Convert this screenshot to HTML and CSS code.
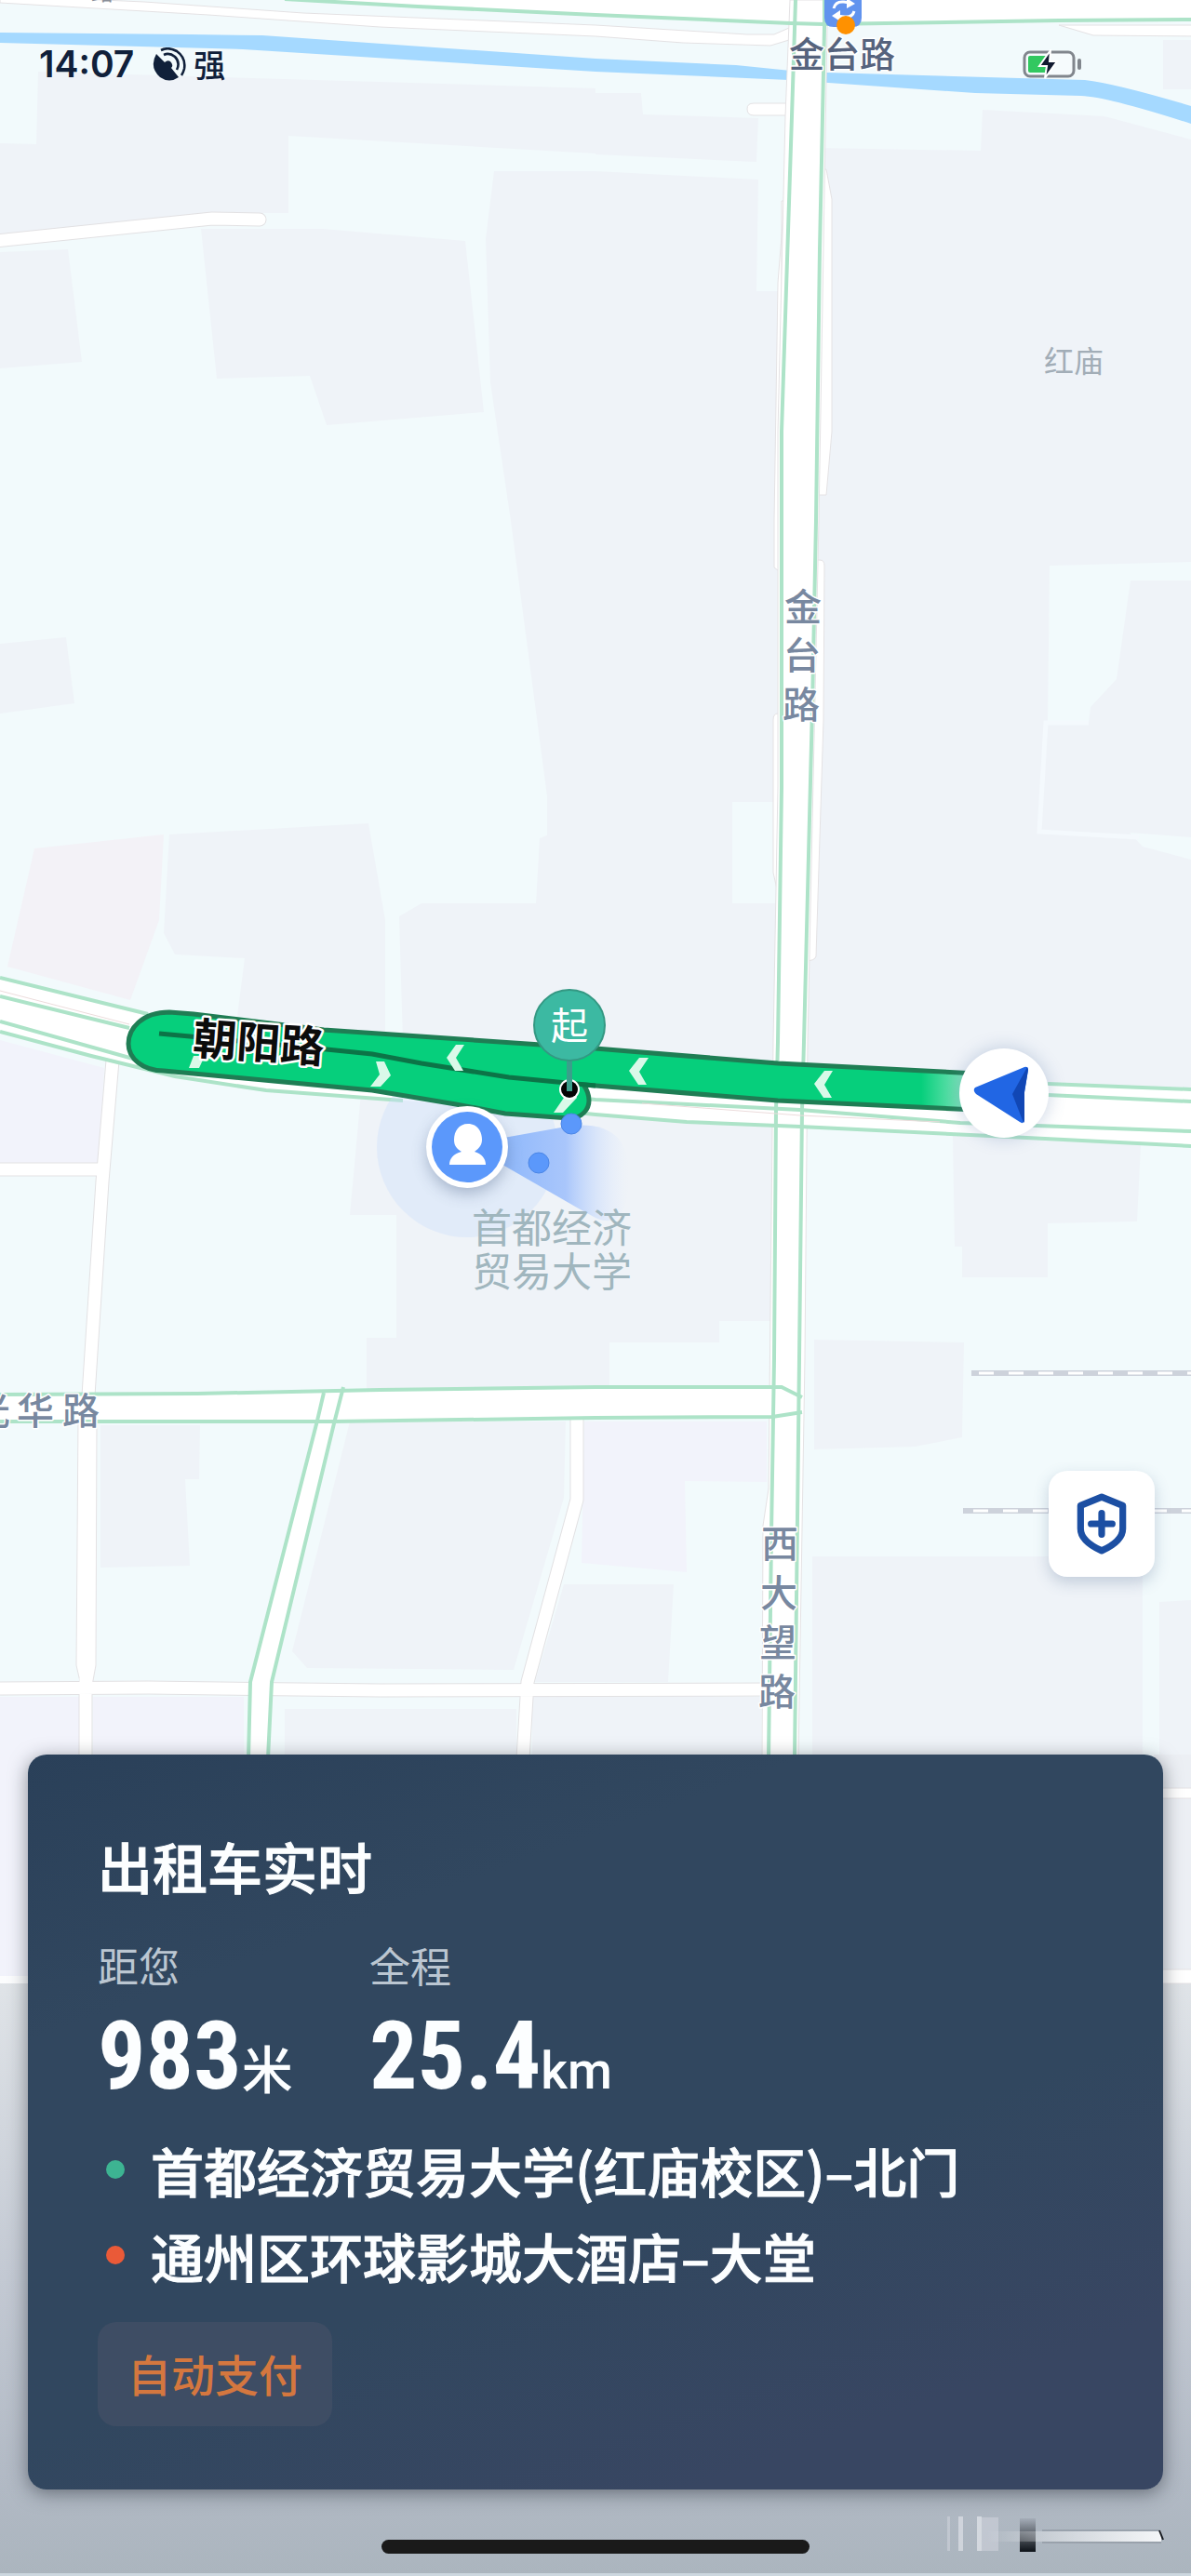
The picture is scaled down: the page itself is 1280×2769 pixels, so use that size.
FILE: index.html
```html
<!DOCTYPE html>
<html lang="zh-CN">
<head>
  <meta charset="utf-8">
  <meta name="viewport" content="width=device-width, initial-scale=1">
  <title>出租车实时</title>
  <link rel="stylesheet" href="styles.css">
</head>
<body>
  <div class="screen">
    <svg class="map" viewBox="0 0 1280 2769" preserveAspectRatio="xMidYMin slice" role="img" aria-label="地图">
      <defs>
        <linearGradient id="routeFill" gradientUnits="userSpaceOnUse" x1="990" y1="0" x2="1070" y2="0">
          <stop offset="0" stop-color="#06cf7c"/>
          <stop offset="1" stop-color="#d8f6e8"/>
        </linearGradient>
        <linearGradient id="cone" gradientUnits="userSpaceOnUse" x1="540" y1="0" x2="676" y2="0">
          <stop offset="0" stop-color="#8fb8fb"/>
          <stop offset="0.5" stop-color="#a9c6fb"/>
          <stop offset="1" stop-color="#dfeafd" stop-opacity="0"/>
        </linearGradient>
        <linearGradient id="floor" x1="0" y1="0" x2="0" y2="1">
          <stop offset="0" stop-color="#e0e4e8"/>
          <stop offset="0.5" stop-color="#c3c9d3"/>
          <stop offset="0.85" stop-color="#b1b9c4"/>
          <stop offset="1" stop-color="#abb5be"/>
        </linearGradient>
        <linearGradient id="darkBar" x1="0" y1="0" x2="0" y2="1">
          <stop offset="0" stop-color="#a5adb8"/>
          <stop offset="1" stop-color="#0d1218"/>
        </linearGradient>
        <linearGradient id="whiteLine" x1="0" y1="0" x2="1" y2="0">
          <stop offset="0" stop-color="#fff" stop-opacity="0"/>
          <stop offset="1" stop-color="#f4f6f8"/>
        </linearGradient>
        <filter id="soft" x="-50%" y="-50%" width="200%" height="200%">
          <feGaussianBlur stdDeviation="9"/>
        </filter>
      </defs>

      <!-- blocks -->
      <g class="block">
        <path d="M41 77L640 95V165L310 146V229L224 229L0 253V154L39 155Z"/>
        <path d="M640 100L689 100L691 123L815 127L813 174L640 166Z"/>
        <path d="M0 271L73 268L88 389L0 396Z"/>
        <path d="M216 246H347L500 259L520 443L351 457L333 404L233 407Z"/>
        <path d="M531 184H640L815 193L813 313H840V862H787V971H840V1150L433 1120L429 985L453 971H576L580 901L588 898V856L549 560L527 411L522 257Z"/>
        <path d="M880 159L1054 162L1056 118L1187 125L1280 150V1180L860 1150Z"/>
        <path d="M1250 43H1280V96H1250Z"/>
        <path d="M0 692L71 685L80 756L0 767Z"/>
        <path d="M182 897L396 885L414 989V1115L255 1092L263 1030L188 1026L176 1003Z"/>
        <path d="M388 1175L830 1205V1420H773V1443H655V1495H394V1438H426V1306H376Z"/>
        <path d="M1024 1220L1226 1230L1222 1313L1126 1315V1373H1034V1340H1026Z"/>
        <path d="M875 1440L1036 1443L1034 1545L983 1555L875 1558Z"/>
        <path d="M873 1673H1228V1900H873Z"/>
        <path d="M1246 1722L1280 1720V1900H1246Z"/>
        <path d="M108 1532H215L214 1590H199L204 1683L108 1685Z"/>
        <path d="M376 1528H608L606 1610L552 1795L330 1793L314 1775Z"/>
        <path d="M606 1703H724L718 1808H575Z"/>
        <path d="M306 1837H555V1890H306Z"/>
        <path d="M572 1824H818V1890H572Z"/>
      </g>
      <path class="block-pink" d="M37 912L176 897L171 989L140 1075L8 1039Z"/>
      <g class="block-violet">
        <path d="M0 1118L112 1148L106 1251H0Z"/>
        <path d="M628 1528H824V1593L736 1592L738 1690L625 1680Z"/>
        <path d="M0 1824H86V2126H0Z"/>
        <path d="M100 1824H262V1890H100Z"/>
      </g>
      <path class="ground" d="M1128 608L1280 604V624H1215L1200 730L1172 760L1170 777L1126 775Z"/>
      <path class="ground" d="M1214 895L1280 900V924L1228 910Z"/>
      <path class="ground-line" d="M1170 777H1124L1117 894L1224 900"/>

      <!-- water -->
      <path class="water" d="M0 35L204 37L282 38L640 63L791 70L850 76L889 78L1166 86Q1200 90 1280 114V133Q1190 104 1162 103L1048 100L848 86L640 77L261 53L0 46Z"/>

      <!-- minor roads -->
      <path class="white" d="M306 0L449 7L640 16L850 25L885 26L1138 22L1280 21V0Z"/>
      <path class="minor" d="M0 -5L155 2L326 14L640 27L803 37H832L848 30V43L828 49L734 46L640 39L408 29L224 16L0 3Z"/>
      <path class="minor" d="M1138 27L1175 38L1290 39V27Z"/>
      <path class="minor" d="M850 111H810Q803 111 803 117Q803 124 810 124H850Z"/>
      <path class="minor-edge" d="M-5 259L228 235L279 236"/>
      <path class="minor-fill" d="M-5 259L228 235L279 236"/>
      <path class="minor-edge butt" d="M121 1140L110 1270L95 1500M-5 1257H111M620 1524V1612L567 1808L562 1890M-5 1815L160 1814L408 1817L830 1816M92 1808V1890"/>
      <path class="minor" d="M84 1524L82 1790L87 1812H99L103 1790L104 1524Z"/>
      <path class="minor-fill butt" d="M121 1140L110 1270L95 1500M-5 1257H111M620 1524V1612L567 1808L562 1890M-5 1815L160 1814L408 1817L830 1816M92 1804V1890"/>

      <!-- railway -->
      <path class="rail" d="M1044 1476H1280M1035 1624H1280"/>
      <path class="rail-dash" d="M1052 1476H1280M1046 1624H1280"/>

      <!-- main roads -->
      <path class="minor" d="M843 216L836 304L832 560V610L840 616V216Z"/>
      <path class="minor" d="M884 182L888 182L894 214V464L888 532H876Z"/>
      <path class="minor" d="M876 602H881Q886 602 886 608L885 774L877 1028Q876 1033 864 1033Z"/>
      <path class="minor" d="M840 767H836Q831 767 831 774V938L836 960Z"/>
      <path class="minor" d="M849 0L844 125L836 464V846L831 1120L826 1600L820 1640L819 1890H858L865 1460L868 1120L880 560L889 29V0Z"/>
      <path class="white" d="M0 1051L159 1090L640 1130L1126 1165L1280 1171V1232L1064 1221L860 1211L738 1206L640 1198L433 1183L286 1172L188 1157L98 1135L0 1109Z"/>
      <path class="white" d="M0 1499L212 1498L408 1494L640 1491H840L862 1502V1518L830 1523L640 1524L359 1528L292 1808L288 1890H267L269 1808L341 1528H0Z"/>
      <g class="green">
        <path d="M306 -1L449 7L640 16L850 25L885 26L1138 22L1280 21"/>
        <path d="M855 0L851 125L840 464V846L836 1120L834 1193L832 1460L829 1650L826 1890"/>
        <path d="M886 0V29L881 268L877 560L873 760L864 1120L862 1193L859 1460L854 1890"/>
        <path d="M0 1051L159 1090M0 1071L139 1105M0 1098L150 1140M0 1109L98 1135L188 1157L286 1172L433 1183"/>
        <path d="M620 1180L640 1182L860 1193L1032 1207L1280 1216"/>
        <path d="M600 1194L640 1198L738 1206L860 1211L1064 1221L1280 1232"/>
        <path d="M1126 1165L1280 1171M1126 1177L1280 1184"/>
        <path d="M0 1499L212 1498L408 1494L640 1491H840L862 1502"/>
        <path d="M0 1528H359L640 1524L830 1523L862 1518"/>
        <path d="M348 1497L341 1527L269 1808L267 1890M369 1491L359 1530L292 1808L288 1890"/>
      </g>
      <path class="hairline" d="M0 1065L139 1101M690 1186L860 1199L1010 1206"/>

      <!-- area beside and under the trip card -->
      <rect x="1240" y="1886" width="40" height="245" fill="#eceff4"/>
      <path class="minor" d="M1200 1922H1290V1933H1200Z"/>
      <rect x="0" y="2128" width="1280" height="641" fill="url(#floor)"/>
      <rect x="0" y="2124" width="40" height="8" fill="#fcfdfe"/>
      <path class="minor" d="M1200 2117H1290V2132H1200Z"/>
      <rect x="0" y="2766" width="1280" height="3" fill="#ccd7df"/>

      <!-- user accuracy and heading -->
      <circle cx="502" cy="1233" r="97" fill="#c9dcfb" opacity="0.35"/>
      <path d="M502 1230L614 1210Q676 1204 676 1262Q676 1325 640 1309L620 1298Z" fill="url(#cone)"/>

      <!-- route -->
      <path class="route" d="M1070 1155L836 1143L640 1127L348 1107L208 1090L182 1088C152 1088 138 1106 138 1122C138 1138 154 1151 176 1151L208 1154L400 1172L490 1187L543 1197L612 1202C626 1202 633 1192 633 1183C633 1176 630 1170 627 1166L640 1167L836 1183L1070 1194"/>
      <path class="route-line" d="M171 1111L204 1114L351 1128L400 1133L453 1143L547 1158L640 1167"/>
      <g class="chevron">
        <path d="M490 1123H499L490 1137L498 1151H489L480 1137Z"/>
        <path d="M687 1137H697L687 1152L695 1166H686L676 1151Z"/>
        <path d="M886 1151H895L886 1166L894 1180H885L875 1165Z"/>
        <path d="M404 1141H413L420 1156L409 1168H398L408 1155Z"/>
        <path d="M208 1135H220L214 1148H203Z"/>
        <path d="M606 1168H616L620 1180L605 1196H595L606 1180Z"/>
      </g>

      <!-- start pin -->
      <circle cx="612" cy="1171" r="11" fill="#fff"/>
      <circle cx="612" cy="1171" r="9" fill="#050505"/>
      <path d="M612 1138V1173" stroke="#3a9f8b" stroke-width="6"/>
      <circle cx="612" cy="1102" r="38" fill="#3cb9a2" stroke="#349883" stroke-width="2"/>
      <text class="pin-text" x="612" y="1117">起</text>
      <circle class="dot" cx="614" cy="1208" r="11"/>
      <circle class="dot" cx="579" cy="1250" r="11"/>

      <!-- user -->
      <circle cx="502" cy="1240" r="42" fill="#4d6486" opacity="0.45" filter="url(#soft)"/>
      <circle cx="502" cy="1233" r="44" fill="#fff"/>
      <circle cx="502" cy="1233" r="38" fill="#5b98fb"/>
      <path d="M503 1208C513 1208 518 1216 518 1225C518 1231 515 1234 510 1238C518 1240 522 1246 522 1252H483C483 1246 487 1240 496 1238C490 1234 488 1231 488 1225C488 1216 493 1208 503 1208Z" fill="#fff"/>

      <!-- taxi position -->
      <circle cx="1079" cy="1175" r="50" fill="#6c86b0" opacity="0.3" filter="url(#soft)"/>
      <circle cx="1079" cy="1175" r="48" fill="#fff"/>
      <path d="M1048 1169L1101 1147Q1105 1146 1105 1150L1101 1174L1101 1204Q1100 1209 1096 1206L1049 1176Q1045 1172 1048 1169Z" fill="#2166e4"/>
      <path d="M1104 1147L1088 1176L1100 1207Q1101 1206 1101 1203V1174L1105 1150Z" fill="#1147b5"/>

      <!-- labels -->
      <text class="poi-grey" x="110" y="0">路</text>
      <text class="station" x="905" y="72">金台路</text>
      <text class="area" x="1154" y="400">红庙</text>
      <g class="road">
        <text x="863" y="667">金</text>
        <text x="862" y="719">台</text>
        <text x="861" y="772">路</text>
        <text x="838" y="1674">西</text>
        <text x="837" y="1727">大</text>
        <text x="836" y="1780">望</text>
        <text x="835" y="1833">路</text>
        <text x="-9" y="1531">光</text>
        <text x="38" y="1531">华</text>
        <text x="87" y="1531">路</text>
      </g>
      <text class="road-main" x="278" y="1138" transform="rotate(4 278 1121)">朝阳路</text>
      <text class="school" x="593" y="1336">首都经济</text>
      <text class="school" x="593" y="1383">贸易大学</text>

      <!-- metro station -->
      <path d="M886 0H926V19Q926 29 916 29H896Q886 29 886 19Z" fill="#6193ee"/>
      <path d="M896 9Q898 1 907 2L913 3M918 12Q916 19 908 18L898 17" fill="none" stroke="#fff" stroke-width="3"/>
      <path d="M910 -2L919 4L910 9ZM903 11L894 17L903 23Z" fill="#fff"/>
      <circle cx="909" cy="27" r="10" fill="#ff9100"/>

      <!-- streaks near the lower edge -->
      <g opacity="0.6">
        <rect x="1018" y="2705" width="3" height="37" fill="#cfd3db"/>
        <rect x="1030" y="2705" width="5" height="37" fill="#e6e8ee"/>
        <rect x="1050" y="2705" width="5" height="37" fill="#eef0f4"/>
        <rect x="1055" y="2706" width="18" height="36" fill="#cfd2dc"/>
      </g>
      <rect x="1096" y="2707" width="17" height="36" fill="url(#darkBar)"/>
      <path d="M1120 2720H1246" stroke="#7c848e" stroke-width="2" opacity="0.4"/>
      <rect x="1060" y="2721" width="188" height="11" fill="url(#whiteLine)"/>
      <path d="M1120 2733H1248" stroke="#7c848e" stroke-width="2" opacity="0.4"/>
      <path d="M1246 2720L1250 2730" stroke="#15191e" stroke-width="2"/>
    </svg>

    <header class="status">
      <time class="time">14:07</time>
      <svg class="satellite" viewBox="0 0 36 36" aria-hidden="true">
        <path d="M4 7L13 16Q16 13 19 15Q23 19 20 22L28 32Q18 39 8 32Q-4 21 4 7Z" fill="#10203a"/>
        <path d="M9 3Q17 -1 26 4Q36 11 34 23Q33 27 31 30M12 8Q18 5 24 10Q30 16 26 24" fill="none" stroke="#10203a" stroke-width="2.6"/>
      </svg>
      <span class="signal">强</span>
      <svg class="battery" viewBox="0 0 64 32" role="img" aria-label="充电中">
        <rect x="2" y="3" width="53" height="26" rx="6" fill="#f6fbfd" stroke="#81868d" stroke-width="3"/>
        <rect x="6" y="7" width="22" height="18" rx="2" fill="#32c860"/>
        <rect x="59" y="10" width="4" height="12" rx="2" fill="#81868d"/>
        <path d="M30 1L18 18H26L24 31L37 13H29Z" fill="#111a30" stroke="#fff" stroke-width="2"/>
      </svg>
    </header>

    <button class="safety" type="button" aria-label="安全中心">
      <svg viewBox="0 0 54 66" aria-hidden="true">
        <path d="M27 5L49 14V38Q49 51 27 61Q5 51 5 38V14Z"/>
        <path d="M27 22V44M16 33H38"/>
      </svg>
    </button>

    <main class="card">
      <h1>出租车实时</h1>
      <dl class="metrics">
        <div class="metric">
          <dt>距您</dt>
          <dd>983<span class="unit">米</span></dd>
        </div>
        <div class="metric">
          <dt>全程</dt>
          <dd>25.4<span class="unit">km</span></dd>
        </div>
      </dl>
      <ul class="places">
        <li class="from">首都经济贸易大学(红庙校区)–北门</li>
        <li class="to">通州区环球影城大酒店–大堂</li>
      </ul>
      <button class="pay" type="button">自动支付</button>
    </main>

    <footer class="home"><span class="home-bar"></span></footer>
  </div>
</body>
</html>
```
FILE: styles.css
```css
* {
  box-sizing: border-box;
}

body {
  margin: 0;
  background: #f2fafc;
  font-family: "Noto Sans CJK SC", sans-serif;
}

button {
  border: none;
  font-family: inherit;
  cursor: pointer;
}

.screen {
  position: relative;
  display: flex;
  flex-direction: column;
  min-height: 100vh;
  overflow: hidden;
}

/* map */
.map {
  position: absolute;
  top: 0;
  left: 0;
  width: 100%;
  height: 100%;
  background: #f2fafc;
}

.block { fill: #eff3f8; }
.block-pink { fill: #f3f2f7; }
.block-violet { fill: #f2f3fb; }
.ground { fill: #f2fafc; }
.ground-line { fill: none; stroke: #f4f9fd; stroke-width: 5; }
.water { fill: #a5d9ff; }
.white { fill: #fff; }
.minor { fill: #fff; stroke: #e4e2e4; stroke-width: 1; }

.minor-edge,
.minor-fill {
  fill: none;
  stroke-linecap: round;
  stroke-linejoin: round;
}

.minor-edge { stroke: #e2e1e3; stroke-width: 15; }
.minor-fill { stroke: #fff; stroke-width: 13; }

.minor-edge.butt,
.minor-fill.butt {
  stroke-linecap: butt;
}

.green { fill: none; stroke: #ade3c8; stroke-width: 4; }
.hairline { fill: none; stroke: #ecdcdc; stroke-width: 1; }
.rail { fill: none; stroke: #cdd2db; stroke-width: 6; }
.rail-dash { fill: none; stroke: #fff; stroke-width: 3; stroke-dasharray: 16 16; }
.route { fill: url(#routeFill); stroke: #1f7d54; stroke-width: 5; }
.route-line { fill: none; stroke: #0c7447; stroke-width: 5; }
.chevron { fill: #d9f9e9; }
.dot { fill: #5b98fb; stroke: #4b86e6; stroke-width: 1; }

.map text {
  text-anchor: middle;
  paint-order: stroke;
  stroke-linejoin: round;
}

.pin-text { font-size: 40px; fill: #fff; }
.poi-grey { font-size: 24px; fill: #8a8f98; }

.station {
  font-size: 38px;
  font-weight: 500;
  fill: #56637d;
  stroke: #fff;
  stroke-width: 3px;
}

.area { font-size: 32px; fill: #a2adb7; }

.road {
  font-size: 40px;
  font-weight: 500;
  fill: #7888a0;
  stroke: #fff;
  stroke-width: 3px;
}

.road-main {
  font-size: 47px;
  font-weight: 700;
  fill: #0c0c0c;
  stroke: #fff;
  stroke-width: 5px;
}

.school { font-size: 43px; fill: #a0b6be; }

/* status bar */
.status {
  position: relative;
  display: flex;
  align-items: center;
  padding: 45px 117px 0 42px;
  color: #10203a;
}

.time {
  font-family: Inter, sans-serif;
  font-size: 39px;
  font-weight: 600;
  line-height: 48px;
}

.satellite {
  width: 36px;
  height: 36px;
  margin-left: 20px;
}

.signal {
  margin-left: 8px;
  font-size: 34px;
  font-weight: 500;
  line-height: 48px;
}

.battery {
  width: 64px;
  height: 32px;
  margin-left: auto;
}

/* safety button */
.safety {
  position: relative;
  display: flex;
  align-items: center;
  justify-content: center;
  width: 114px;
  height: 114px;
  margin: auto 39px 191px auto;
  border-radius: 20px;
  background: #fff;
  box-shadow: 0 6px 16px rgba(60, 90, 130, 0.25);
}

.safety svg {
  width: 56px;
  height: 68px;
  fill: none;
  stroke: #1c4fa3;
  stroke-width: 7;
  stroke-linecap: round;
  stroke-linejoin: round;
}

/* trip card */
.card {
  position: relative;
  margin: 0 30px;
  padding: 80px 75px 68px;
  border-radius: 20px;
  background: linear-gradient(160deg, #2a4059 0%, #31475f 25%, #31475f 60%, #384662 85%);
  box-shadow: 0 4px 20px rgba(30, 35, 45, 0.5);
  color: #fcfeff;
}

.card h1 {
  margin: 0;
  font-size: 59px;
  font-weight: 500;
  line-height: 80px;
  -webkit-text-stroke: 1px currentColor;
}

.metrics {
  display: grid;
  grid-template-columns: 292px auto;
  justify-content: start;
  margin: 36px 0 0;
}

.metric dt {
  font-size: 44px;
  line-height: 60px;
  color: #bbc6d1;
}

.metric dd {
  margin: 0;
  font-family: "Roboto Condensed", "Liberation Sans Narrow", Roboto, sans-serif;
  font-size: 102px;
  font-weight: 700;
  line-height: 136px;
  height: 144px;
  white-space: nowrap;
}

.metric .unit {
  font-family: Roboto, "Noto Sans CJK SC", sans-serif;
  font-size: 55px;
  font-weight: 500;
  line-height: 60px;
}

.places {
  margin: 0;
  padding: 0;
  list-style: none;
}

.places li {
  display: flex;
  align-items: center;
  gap: 28px;
  padding-left: 9px;
  font-size: 57px;
  font-weight: 500;
  line-height: 92px;
  -webkit-text-stroke: 1px currentColor;
}

.places li::before {
  content: "";
  width: 20px;
  height: 20px;
  border-radius: 50%;
  background: #3db492;
}

.places .to::before {
  background: #ea5a38;
}

.pay {
  display: block;
  margin-top: 26px;
  padding: 0 32px 2px;
  border-radius: 20px;
  background: #3e4d64;
  color: #d4773f;
  font-size: 47px;
  font-weight: 500;
  line-height: 110px;
}

/* home indicator */
.home {
  position: relative;
  display: flex;
  justify-content: center;
  padding: 54px 0 24px;
}

.home-bar {
  width: 36%;
  height: 15px;
  border-radius: 8px;
  background: #1a1a1a;
}
```
